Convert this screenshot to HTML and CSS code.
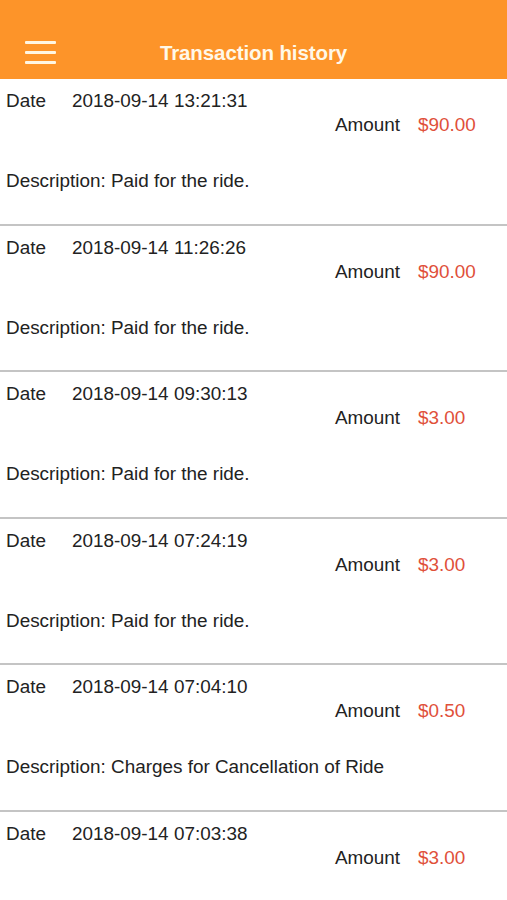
FILE: index.html
```html
<!DOCTYPE html>
<html lang="en">
  <head>
    <meta charset="UTF-8" />
    <meta name="viewport" content="width=device-width, initial-scale=1.0" />
    <title>Transaction history</title>
    <link rel="stylesheet" href="styles.css">
  </head>

  <body>
    <div class="topbar">
      <button class="menu-btn" aria-label="Menu">
        <span></span><span></span><span></span>
      </button>
      <h1>Transaction history</h1>
    </div>

    <ul class="history">
      <li class="txn">
        <div class="txn-date"><span class="label">Date</span><span>2018-09-14 13:21:31</span></div>
        <div class="txn-amount"><span>Amount</span><span class="value">$90.00</span></div>
        <div class="txn-desc">Description: Paid for the ride.</div>
      </li>
      <li class="txn">
        <div class="txn-date"><span class="label">Date</span><span>2018-09-14 11:26:26</span></div>
        <div class="txn-amount"><span>Amount</span><span class="value">$90.00</span></div>
        <div class="txn-desc">Description: Paid for the ride.</div>
      </li>
      <li class="txn">
        <div class="txn-date"><span class="label">Date</span><span>2018-09-14 09:30:13</span></div>
        <div class="txn-amount"><span>Amount</span><span class="value">$3.00</span></div>
        <div class="txn-desc">Description: Paid for the ride.</div>
      </li>
      <li class="txn">
        <div class="txn-date"><span class="label">Date</span><span>2018-09-14 07:24:19</span></div>
        <div class="txn-amount"><span>Amount</span><span class="value">$3.00</span></div>
        <div class="txn-desc">Description: Paid for the ride.</div>
      </li>
      <li class="txn">
        <div class="txn-date"><span class="label">Date</span><span>2018-09-14 07:04:10</span></div>
        <div class="txn-amount"><span>Amount</span><span class="value">$0.50</span></div>
        <div class="txn-desc">Description: Charges for Cancellation of Ride</div>
      </li>
      <li class="txn">
        <div class="txn-date"><span class="label">Date</span><span>2018-09-14 07:03:38</span></div>
        <div class="txn-amount"><span>Amount</span><span class="value">$3.00</span></div>
      </li>
    </ul>
  </body>
</html>
```

FILE: styles.css
```css
body {
  margin: 0;
  font-family: "Liberation Sans", Arial, sans-serif;
  background-color: #fff;
  color: #222;
  overflow: hidden;
}

.topbar {
  height: 79px;
  background-color: #fd9429;
  display: flex;
  align-items: center;
  padding-top: 26px;
  box-sizing: border-box;
  position: relative;
}

.topbar h1 {
  flex: 1;
  margin: 0;
  text-align: center;
  color: #fff8e8;
  font-size: 20.5px;
  font-weight: bold;
  letter-spacing: -0.1px;
}

.menu-btn {
  position: absolute;
  left: 25px;
  top: 41px;
  width: 31px;
  padding: 0;
  border: 0;
  background: none;
  display: flex;
  flex-direction: column;
  gap: 7px;
}

.menu-btn span {
  display: block;
  height: 3px;
  background-color: #fff6e2;
  border-radius: 1px;
}

.history {
  list-style: none;
  margin: 0;
  padding: 0;
}

.txn {
  box-sizing: border-box;
  height: 146.6px;
  padding: 11px 0 0 6px;
  border-bottom: 2px solid #c4c4c4;
  font-size: 18.9px;
  line-height: 22px;
}

.txn-date {
  display: flex;
}

.txn-date .label {
  width: 66px;
}

.txn-amount {
  display: flex;
  justify-content: flex-end;
  margin-top: 2px;
}

.txn-amount .value {
  width: 89px;
  margin-left: 18px;
  color: #e0503a;
}

.txn-desc {
  margin-top: 34px;
}
```
